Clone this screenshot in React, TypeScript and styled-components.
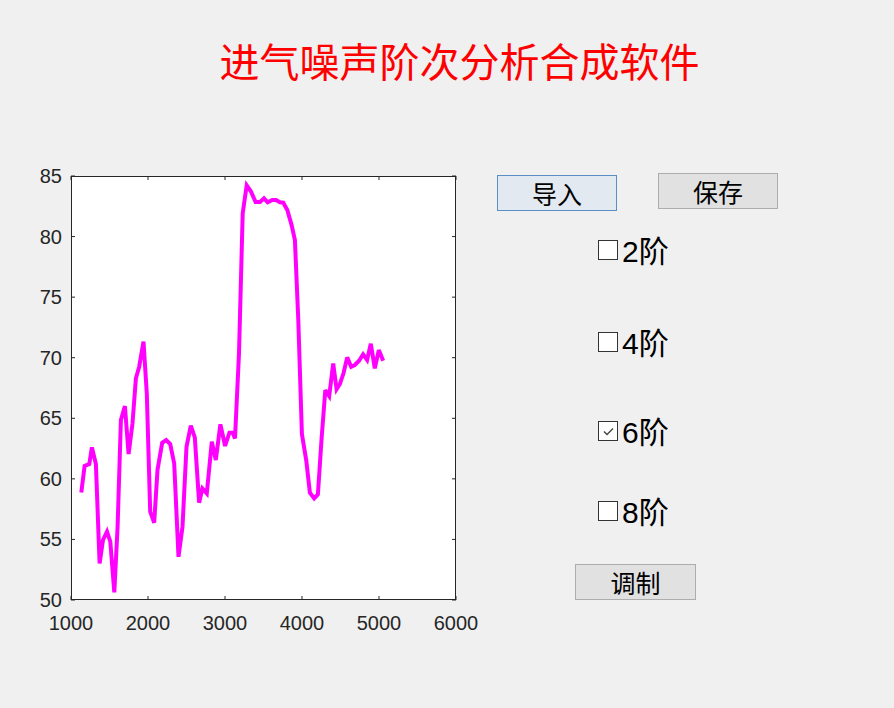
import React, { useState } from 'react';
import styled, { createGlobalStyle } from 'styled-components';

const GlobalStyle = createGlobalStyle`
  html, body {
    margin: 0;
    padding: 0;
    background: #f0f0f0;
  }
`;

// spectrum trace, [frequency (Hz), level (dB)]
const trace: [number, number][] = [
  [1134, 58.88], [1177, 61.06], [1238, 61.22], [1272, 62.6], [1324, 61.22],
  [1372, 53.02], [1415, 54.95], [1467, 55.64], [1510, 54.81], [1562, 50.63],
  [1605, 56.05], [1648, 64.86], [1700, 66.01], [1748, 62.05], [1799, 64.58],
  [1843, 68.3], [1886, 69.26], [1942, 71.32], [1985, 67.06], [2029, 57.29],
  [2080, 56.38], [2124, 60.73], [2184, 62.98], [2236, 63.2], [2288, 62.87],
  [2340, 61.28], [2396, 53.57], [2448, 56.05], [2500, 62.65], [2556, 64.39],
  [2608, 63.42], [2664, 58.03], [2707, 59.21], [2763, 58.8], [2828, 63.07],
  [2880, 61.55], [2940, 64.5], [3001, 62.71], [3057, 63.81], [3100, 63.81],
  [3130, 63.34], [3182, 70.36], [3230, 81.92], [3282, 84.23], [3334, 83.76],
  [3398, 82.85], [3455, 82.85], [3506, 83.16], [3554, 82.83], [3614, 83.02],
  [3662, 83.02], [3714, 82.83], [3757, 82.8], [3809, 82.19], [3865, 80.95],
  [3908, 79.72], [3952, 73.11], [3999, 63.7], [4055, 61.55], [4103, 58.86],
  [4159, 58.39], [4207, 58.72], [4254, 63.34], [4302, 67.33], [4353, 66.84],
  [4405, 69.53], [4449, 67.39], [4492, 67.83], [4539, 68.71], [4587, 70.03],
  [4639, 69.26], [4686, 69.4], [4742, 69.75], [4794, 70.28], [4846, 69.81],
  [4894, 71.16], [4946, 69.12], [4997, 70.63], [5054, 69.75],
];

const PLOT = { left: 31, top: 16, width: 385, height: 424 };
const X_RANGE = [1000, 6000];
const Y_RANGE = [50, 85];
const xTicks = [1000, 2000, 3000, 4000, 5000, 6000];
const yTicks = [50, 55, 60, 65, 70, 75, 80, 85];

const sx = (v: number) =>
  PLOT.left + ((v - X_RANGE[0]) / (X_RANGE[1] - X_RANGE[0])) * PLOT.width;
const sy = (v: number) =>
  PLOT.top + PLOT.height - ((v - Y_RANGE[0]) / (Y_RANGE[1] - Y_RANGE[0])) * PLOT.height;

const Chart = () => {
  const right = PLOT.left + PLOT.width;
  const bottom = PLOT.top + PLOT.height;
  const points = trace.map(([f, db]) => `${sx(f).toFixed(1)},${sy(db).toFixed(1)}`).join(' ');
  return (
    <ChartSvg width={440} height={480} viewBox="0 0 440 480">
      <rect x={PLOT.left} y={PLOT.top} width={PLOT.width} height={PLOT.height} fill="#fff" />
      <polyline
        points={points}
        fill="none"
        stroke="#ff00ff"
        strokeWidth={4}
        strokeLinejoin="miter"
        strokeMiterlimit={3}
      />
      <g stroke="#262626" strokeWidth={1}>
        {xTicks.map((t) => (
          <g key={t}>
            <line x1={sx(t)} x2={sx(t)} y1={bottom} y2={bottom - 4} />
            <line x1={sx(t)} x2={sx(t)} y1={PLOT.top} y2={PLOT.top + 4} />
          </g>
        ))}
        {yTicks.map((t) => (
          <g key={t}>
            <line x1={PLOT.left} x2={PLOT.left + 4} y1={sy(t)} y2={sy(t)} />
            <line x1={right} x2={right - 4} y1={sy(t)} y2={sy(t)} />
          </g>
        ))}
        <rect
          x={PLOT.left + 0.5}
          y={PLOT.top + 0.5}
          width={PLOT.width - 1}
          height={PLOT.height - 1}
          fill="none"
        />
      </g>
      {xTicks.map((t) => (
        <TickLabel key={t} x={sx(t)} y={bottom + 30} textAnchor="middle">
          {t}
        </TickLabel>
      ))}
      {yTicks.map((t) => (
        <TickLabel key={t} x={PLOT.left - 9} y={sy(t) + 7} textAnchor="end">
          {t}
        </TickLabel>
      ))}
    </ChartSvg>
  );
};

const CheckMark = () => (
  <svg width="15" height="15" viewBox="0 0 15 15">
    <polyline points="3,7.5 6,10.5 12,4.5" fill="none" stroke="#444" strokeWidth={1.4} />
  </svg>
);

const orders = [
  { order: 2, space: 24 },
  { order: 4, space: 62 },
  { order: 6, space: 59 },
  { order: 8, space: 50 },
];

const App = () => {
  const [checked, setChecked] = useState<Record<number, boolean>>({ 6: true });
  return (
    <>
      <GlobalStyle />
      <Page>
        <Header>
          <Title>进气噪声阶次分析合成软件</Title>
        </Header>
        <Main>
          <Chart />
          <Controls>
            <ButtonRow>
              <Button $focused>导入</Button>
              <Button>保存</Button>
            </ButtonRow>
            <CheckList>
              {orders.map(({ order, space }) => (
                <CheckRow
                  key={order}
                  $space={space}
                  onClick={() => setChecked((c) => ({ ...c, [order]: !c[order] }))}
                >
                  <Box>{checked[order] && <CheckMark />}</Box>
                  <CheckLabel>
                    {order}
                    <Han>阶</Han>
                  </CheckLabel>
                </CheckRow>
              ))}
            </CheckList>
            <ModulateButton>调制</ModulateButton>
          </Controls>
        </Main>
      </Page>
    </>
  );
};

export default App;

const Page = styled.div`
  width: 894px;
  height: 708px;
  background: #f0f0f0;
  overflow: hidden;
`;

const Header = styled.header`
  box-sizing: border-box;
  height: 160px;
  padding: 40px 0 0 25px;
`;

const Title = styled.h1`
  margin: 0;
  text-align: center;
  font-family: 'Noto Sans CJK SC', sans-serif;
  font-weight: 400;
  font-size: 40px;
  line-height: 1;
  color: #ff0000;
`;

const Main = styled.main`
  display: flex;
  align-items: flex-start;
  padding-left: 40px;
`;

const ChartSvg = styled.svg`
  display: block;
  flex: none;
`;

const TickLabel = styled.text`
  font-family: 'Liberation Sans', Arial, sans-serif;
  font-size: 20px;
  fill: #262626;
`;

const Controls = styled.div`
  display: flex;
  flex-direction: column;
  align-items: flex-start;
  margin-left: 17px;
  padding-top: 13px;
`;

const ButtonRow = styled.div`
  display: flex;
  align-items: flex-start;
  gap: 41px;
`;

const Button = styled.button<{ $focused?: boolean }>`
  box-sizing: border-box;
  width: 120px;
  height: 36px;
  margin-top: ${({ $focused }) => ($focused ? '2px' : '0')};
  padding: 0;
  border: 1px solid ${({ $focused }) => ($focused ? '#5a8fc6' : '#adadad')};
  background: ${({ $focused }) => ($focused ? '#e3e9f1' : '#e1e1e1')};
  font-family: 'Noto Sans CJK SC', sans-serif;
  font-size: 25px;
  line-height: 1;
  color: #000;
  cursor: pointer;
`;

const ModulateButton = styled(Button)`
  width: 121px;
  margin: 38px 0 0 78px;
`;

const CheckList = styled.div`
  display: flex;
  flex-direction: column;
  margin-left: 101px;
`;

const CheckRow = styled.label<{ $space: number }>`
  display: flex;
  align-items: center;
  height: 30px;
  margin-top: ${({ $space }) => $space}px;
  cursor: pointer;
`;

const Box = styled.span`
  box-sizing: border-box;
  display: flex;
  align-items: center;
  justify-content: center;
  width: 20px;
  height: 20px;
  border: 1.5px solid #333;
  background: #fff;
`;

const CheckLabel = styled.span`
  margin-left: 4px;
  font-family: 'Liberation Sans', 'Noto Sans CJK SC', sans-serif;
  font-size: 30px;
  line-height: 1;
  color: #000;
`;

const Han = styled.span`
  font-family: 'Noto Sans CJK SC', sans-serif;
  font-size: 30px;
`;
